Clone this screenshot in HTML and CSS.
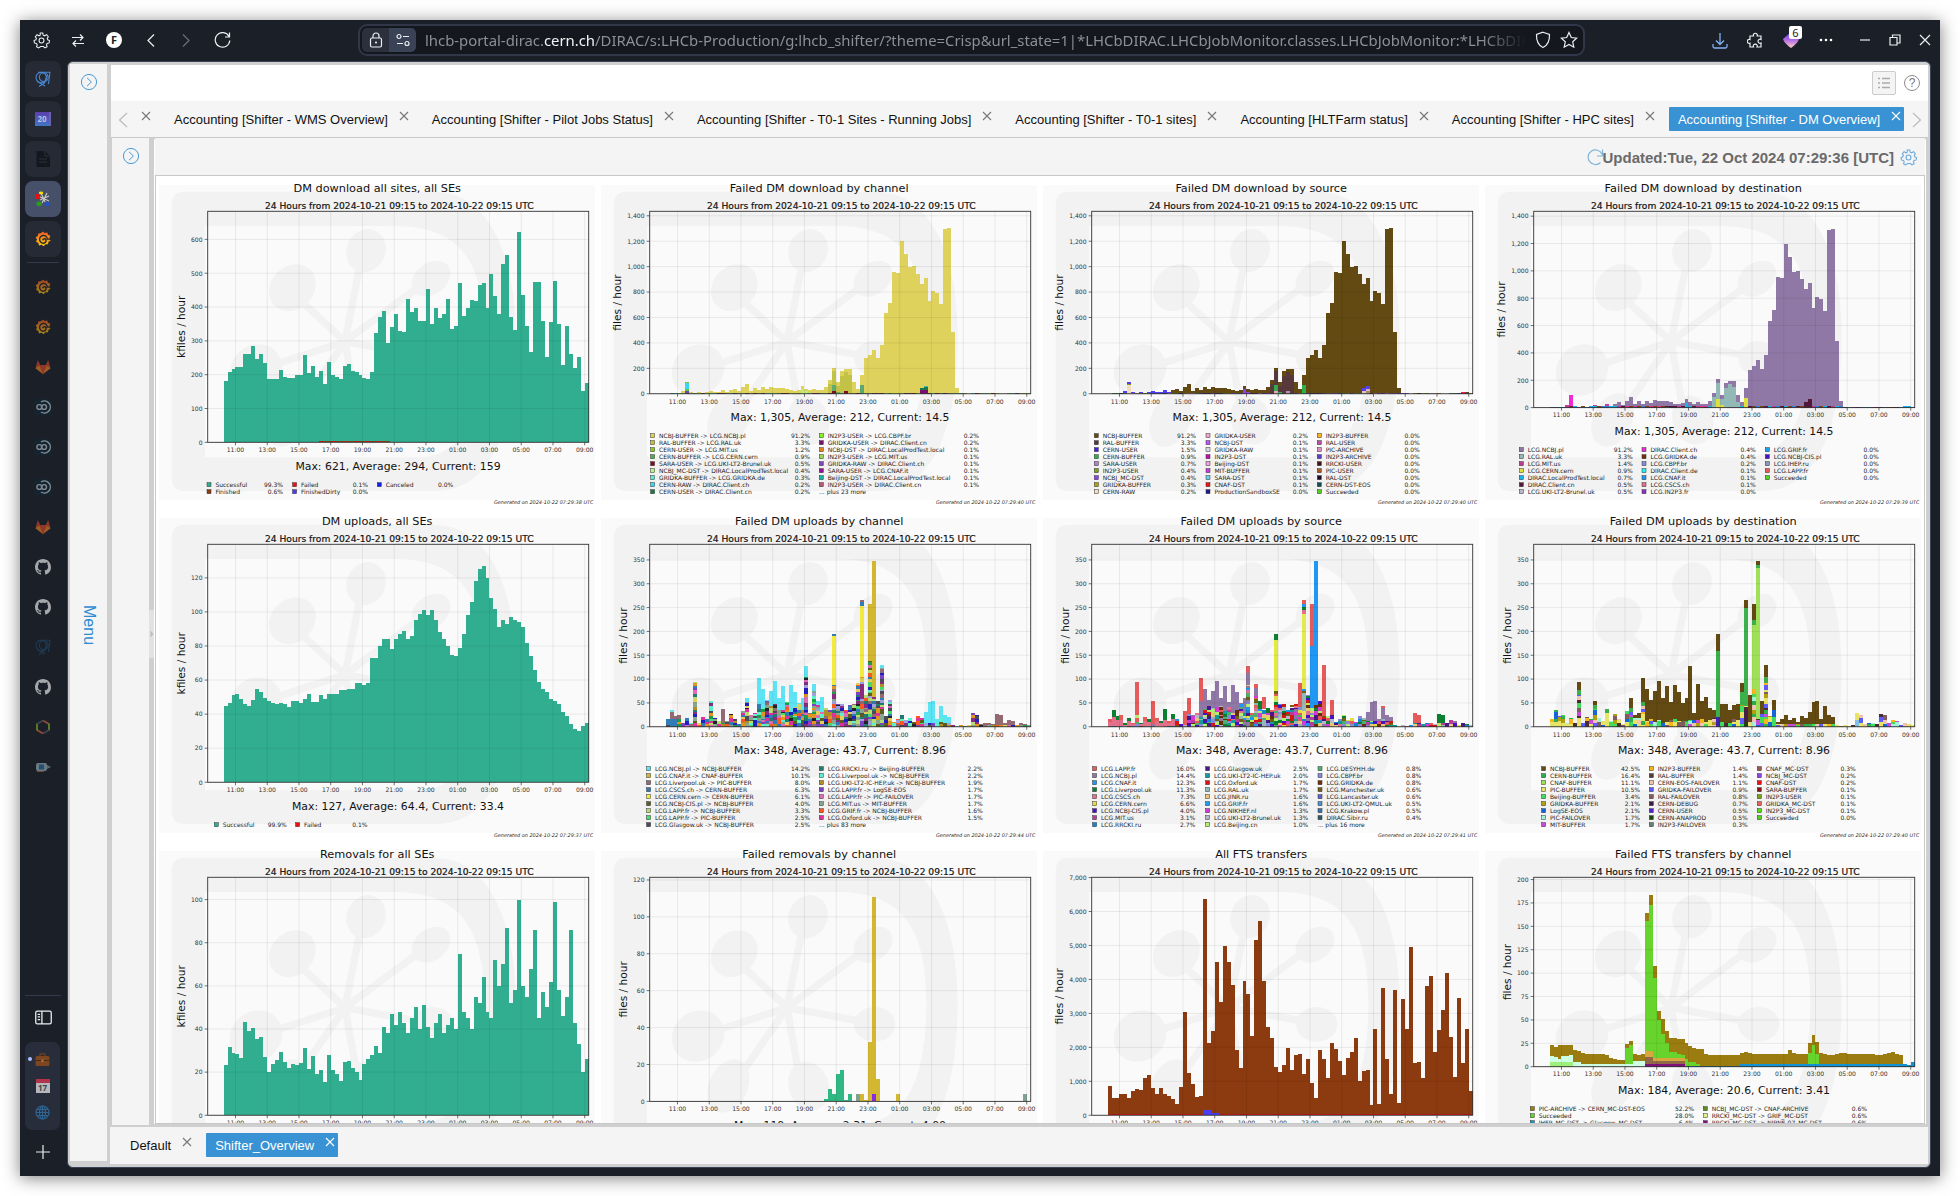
FILE: index.html
```html
<!DOCTYPE html>
<html lang="en">
<head>
<meta charset="utf-8">
<title>Accounting - DM Overview</title>
<link rel="stylesheet" href="styles.css">
</head>
<body>
<svg class="defs" width="0" height="0">
  <defs>
    <linearGradient id="fire" x1="0" y1="0" x2="0" y2="1"><stop offset="0" stop-color="#f05a28"/><stop offset="1" stop-color="#fbca0a"/></linearGradient>
    <linearGradient id="gem" x1="0" y1="0" x2="0" y2="1"><stop offset="0" stop-color="#5a4ae8"/><stop offset=".5" stop-color="#b36be8"/><stop offset="1" stop-color="#ffd0c0"/></linearGradient>
    <symbol id="i-x" viewBox="0 0 10 10"><path d="M1 1L9 9M9 1L1 9" fill="none" stroke="currentColor" stroke-width="1.1"/></symbol>
    <symbol id="i-go" viewBox="0 0 18 18"><circle cx="9" cy="9" r="7.6" fill="none" stroke="currentColor"/><path d="M7 4.8L11.4 9L7 13.2" fill="none" stroke="currentColor"/></symbol>
    <symbol id="i-cern" viewBox="0 0 16 16"><g fill="none" stroke="currentColor" stroke-width="1.1"><circle cx="6.2" cy="6.6" r="5.2"/><circle cx="8.800" cy="6.2" r="4.400"/><path d="M3 1.200H15.500M15 1L13.500 13M12.500 3.500L9.500 12L4 15.500M2.500 10.500L10 15"/></g></symbol>
    <symbol id="i-grafana" viewBox="0 0 16 16"><path d="M8 .4L9.7 2L12.2 1.4L13 3.7L15.4 4.8L14.4 7.2L15.6 9.5L13.4 10.9L13 13.3L10.5 13.2L8.6 15.3L6.6 13.8L4 14.5L3.4 12L1 10.8L2 8.5L.6 6.3L2.8 4.9L3.2 2.4L5.8 2.3Z" fill="url(#fire)"/><path d="M15.500 8.200H12.400A3.900 3.900 0 1 0 9.200 12.200A3.200 3.200 0 0 0 10.800 8.200A2 2 0 0 0 7.600 9.200" fill="none" stroke="#20252e" stroke-width="1.300"/></symbol>
    <symbol id="i-gitlab" viewBox="0 0 16 16"><path d="M8 15L.5 9.3L2.8 1L5.2 6H10.8L13.2 1L15.5 9.3Z" fill="#d44a2a"/><path d="M8 15L.5 9.3L5.2 6L8 15L10.8 6L15.5 9.3Z" fill="#e8852a"/><path d="M8 15L4 6H12Z" fill="#d8472a"/></symbol>
    <symbol id="i-eight" viewBox="0 0 16 16"><rect width="16" height="16" fill="#0d2a36"/><g fill="none" stroke="#c4ccd2" stroke-width="1.400"><circle cx="4.300" cy="8" r="2.400"/><circle cx="9.100" cy="8" r="2.400"/><path d="M6 3A6 6 0 1 1 6 13"/></g></symbol>
    <symbol id="i-github" viewBox="0 0 16 16"><path fill="#b4b6ba" d="M8 0C3.58 0 0 3.58 0 8c0 3.54 2.29 6.53 5.47 7.59.4.07.55-.17.55-.38 0-.19-.01-.82-.01-1.49-2.01.37-2.53-.49-2.69-.94-.09-.23-.48-.94-.82-1.13-.28-.15-.68-.52-.01-.53.63-.01 1.08.58 1.23.82.72 1.21 1.87.87 2.33.66.07-.52.28-.87.51-1.07-1.78-.2-3.64-.89-3.64-3.95 0-.87.31-1.59.82-2.15-.08-.2-.36-1.02.08-2.12 0 0 .67-.21 2.2.82.64-.18 1.32-.27 2-.27s1.36.09 2 .27c1.53-1.04 2.2-.82 2.2-.82.44 1.1.16 1.92.08 2.12.51.56.82 1.27.82 2.15 0 3.07-1.87 3.75-3.65 3.95.29.25.54.73.54 1.48 0 1.07-.01 1.93-.01 2.2 0 .21.15.46.55.38A8 8 0 0 0 16 8c0-4.42-3.58-8-8-8z"/></symbol>
    <symbol id="i-gear" viewBox="0 0 16 16"><g fill="none" stroke="currentColor"><circle cx="8" cy="8" r="2.3"/><path d="M6.8 1h2.4l.4 2 1.4.6 1.8-1.1 1.6 1.9-1 1.6.5 1.3 1.6.7-.3 2.3-1.9.5-.7 1.2.7 1.8-2 1.2-1.5-1.3H7.2L5.300 15l-2-1.2.7-1.800-.8-1.2-1.900-.5L1 8l1.700-.7.5-1.300-1-1.600 1.600-1.900 1.800 1.100 1.200-.6z"/></g></symbol>
  </defs>
</svg>

<div class="window">
  <header class="topbar">
    <svg class="tb-icon" style="width:17px" viewBox="0 0 16 16"><use href="#i-gear"/></svg>
    <svg class="tb-icon" style="width:14px" viewBox="0 0 14 14"><path d="M1 4H12M9 1L12 4L9 7M13 10H2M5 7L2 10L5 13" class="ln"/></svg>
    <span class="f-badge">F</span>
    <svg class="tb-icon" style="width:14px" viewBox="0 0 14 14"><path d="M10 1L4 7L10 13" class="ln"/></svg>
    <svg class="tb-icon dim" style="width:14px" viewBox="0 0 14 14"><path d="M4 1L10 7L4 13" class="ln"/></svg>
    <svg class="tb-icon reload" style="width:17px" viewBox="0 0 17 17"><path d="M15 4.500A7.300 7.300 0 1 0 15.800 8.500M15.500 .5V5H11" class="ln"/></svg>
    <div class="address">
      <span class="chips">
        <span class="chip lock"><svg width="14" height="16" viewBox="0 0 14 16"><rect x="1.500" y="6" width="11" height="9" rx="1.500" class="ln"/><path d="M4 6V4a3 3 0 0 1 6 0V6" class="ln"/><circle cx="7" cy="10.500" r="1" fill="#fff"/></svg></span>
        <span class="chip perms"><svg width="14" height="14" viewBox="0 0 14 14"><circle cx="3" cy="3.500" r="2" class="ln"/><path d="M7 3.500H13M1 10.500H7" class="ln"/><circle cx="11" cy="10.500" r="2" class="ln"/></svg></span>
      </span>
      <span class="url">lhcb-portal-dirac.<b>cern.ch</b>/DIRAC/s:LHCb-Production/g:lhcb_shifter/?theme=Crisp&amp;url_state=1|*LHCbDIRAC.LHCbJobMonitor.classes.LHCbJobMonitor:*LHCbDIRAC.LHCbT</span>
      <svg width="16" height="18" viewBox="0 0 16 18"><path d="M8 1.200L14.500 3.500C14.700 10 12.500 14.500 8 16.500C3.500 14.500 1.300 10 1.500 3.500Z" class="ln"/></svg>
      <svg width="18" height="18" viewBox="0 0 18 18"><path d="M9 1.500L11.300 6.500L16.700 7.100L12.700 10.800L13.800 16.200L9 13.500L4.200 16.200L5.300 10.800L1.300 7.100L6.700 6.500Z" class="ln"/></svg>
    </div>
    <div class="ctl">
      <svg width="16" height="17" viewBox="0 0 16 17"><path d="M8 1V12M4 8.500L8 12.500L12 8.500M1 12V14.500Q1 16 2.500 16H13.500Q15 16 15 14.500V12" fill="none" stroke="#84b0f0" stroke-width="1.300"/></svg>
      <svg width="16" height="17" viewBox="0 0 16 17"><path d="M3 4H6.500A2 2 0 1 1 10.200 4H14V7.500A2 2 0 1 0 14 11V15H10A2 2 0 1 0 6.500 15H3V11.200A2 2 0 1 1 3 7.500Z" class="ln"/></svg>
      <span class="gem"><svg width="18" height="18" viewBox="0 0 18 18"><path d="M9 1L17 8Q16 12 9 17Q2 12 1 8Z" fill="url(#gem)"/></svg><i class="count">6</i></span>
      <svg width="14" height="4" viewBox="0 0 14 4" fill="#fff"><circle cx="2" cy="2" r="1.300"/><circle cx="7" cy="2" r="1.300"/><circle cx="12" cy="2" r="1.300"/></svg>
    </div>
    <div class="winctl">
      <svg width="12" height="12" viewBox="0 0 12 12"><path d="M1 6H11" class="ln"/></svg>
      <svg width="12" height="12" viewBox="0 0 12 12"><path d="M1 3.500H8V11H1ZM3.500 3.500V1H11V9H8" class="ln"/></svg>
      <svg width="12" height="12" viewBox="0 0 12 12"><path d="M1 1L11 11M11 1L1 11" class="ln"/></svg>
    </div>
  </header>

  <div class="body">
    <aside class="rail">
      <div class="tile"><svg class="cern" viewBox="0 0 16 16"><use href="#i-cern"/></svg></div>
      <div class="tile"><span class="twenty">20</span></div>
      <div class="tile"><svg viewBox="0 0 16 16"><path d="M1.500 0H10L15 5V16H1.500Z" fill="#14171d"/><path d="M10 0V5H15M4 8H12M4 11H12" stroke="#2b303a" fill="none"/></svg></div>
      <div class="tile on"><svg viewBox="0 0 16 16"><path d="M3 5L14 10M12 2L7 12M5 9L14 5M6 2L10 11" stroke="#c8c8c0" stroke-width="1.200"/><ellipse cx="6" cy="2" rx="2.200" ry="1.400" fill="#ffe000"/><ellipse cx="2.500" cy="5.500" rx="2.500" ry="2.700" fill="#e81010"/><ellipse cx="4" cy="12.800" rx="2.700" ry="2.400" fill="#2c9a20"/><ellipse cx="12.300" cy="13" rx="2.800" ry="2.200" fill="#2a4fc0"/></svg></div>
      <div class="tile"><svg viewBox="0 0 16 16"><use href="#i-grafana"/></svg></div>
      <hr class="rule">
      <div class="tile flat"><svg viewBox="0 0 16 16"><use href="#i-grafana"/></svg></div>
      <div class="tile flat"><svg viewBox="0 0 16 16"><use href="#i-grafana"/></svg></div>
      <div class="tile flat"><svg viewBox="0 0 16 16"><use href="#i-gitlab"/></svg></div>
      <div class="tile flat"><svg viewBox="0 0 16 16"><use href="#i-eight"/></svg></div>
      <div class="tile flat"><svg viewBox="0 0 16 16"><use href="#i-eight"/></svg></div>
      <div class="tile flat"><svg viewBox="0 0 16 16"><use href="#i-eight"/></svg></div>
      <div class="tile flat"><svg viewBox="0 0 16 16"><use href="#i-gitlab"/></svg></div>
      <div class="tile flat gh"><svg viewBox="0 0 16 16"><use href="#i-github"/></svg></div>
      <div class="tile flat gh"><svg viewBox="0 0 16 16"><use href="#i-github"/></svg></div>
      <div class="tile flat"><svg class="cern faint" viewBox="0 0 16 16"><use href="#i-cern"/></svg></div>
      <div class="tile flat gh"><svg viewBox="0 0 16 16"><use href="#i-github"/></svg></div>
      <div class="tile flat"><svg viewBox="0 0 16 16" fill="none" stroke-width="2"><path d="M8 1.500L14 5" stroke="#d9604a"/><path d="M14 4.500V11.500" stroke="#84b02c"/><path d="M14 11L8 14.500" stroke="#555b62"/><path d="M8 14.500L2 11" stroke="#d9604a"/><path d="M2 11.500V4.500" stroke="#84b02c"/><path d="M2 5L8 1.500" stroke="#555b62"/></svg></div>
      <div class="tile flat"><svg viewBox="0 0 16 16"><rect x="1" y="4" width="11" height="8" rx="2" fill="#9ab0bc"/><rect x="4" y="5.500" width="5" height="5" fill="#2b6f9c"/><path d="M12 6L16 8L12 10Z" fill="#7c98a8"/><path d="M2 12.500H9" stroke="#b0604a"/></svg></div>
      <span class="spacer"></span>
      <hr class="rule wide">
      <div class="mini side"><svg viewBox="0 0 16 14" width="17" height="15"><rect x=".7" y="1" width="14.600" height="12" rx="1.500" class="ln"/><path d="M6.500 1V13M2.500 4H4.800M2.500 6.500H4.800M2.500 9H4.800" class="ln"/></svg></div>
      <div class="group">
        <i class="dot"></i>
        <svg width="15" height="15" viewBox="0 0 15 15"><path d="M5 4V2H10V4" fill="none" stroke="#6b3d1e" stroke-width="1.300"/><rect x=".5" y="4" width="14" height="10" rx="1.500" fill="#7d4520"/><path d="M.5 8.500H14.500" stroke="#4d2a12"/><rect x="6.500" y="7.500" width="2" height="2.500" fill="#a9784c"/></svg>
        <span class="cal"><b></b>17</span>
        <svg width="15" height="15" viewBox="0 0 15 15" fill="none" stroke="#2f6390" stroke-width="1.200"><circle cx="7.500" cy="7.500" r="6.500"/><ellipse cx="7.500" cy="7.500" rx="3" ry="6.500"/><path d="M1 7.500H14M2 4.300H13M2 10.700H13M7.500 1V14"/></svg>
      </div>
      <div class="mini plus"><svg viewBox="0 0 14 14" width="14" height="14"><path d="M7 0V14M0 7H14" class="ln"/></svg></div>
    </aside>

    <div class="page">
      <nav class="menu-strip">
        <svg class="go" viewBox="0 0 18 18"><use href="#i-go"/></svg>
        <span class="menu-label">Menu</span>
      </nav>
      <main class="desk">
        <div class="banner">
          <span class="listbtn"><svg width="14" height="12" viewBox="0 0 14 12"><path d="M5 1.500H13M5 6H13M5 10.500H13M1 1.500H3M1 6H3M1 10.500H3" stroke="#aaa" stroke-width="1.300"/></svg></span>
          <span class="help">?</span>
        </div>
        <div class="tabs">
          <svg class="scroll first" width="10" height="16" viewBox="0 0 10 16"><path d="M9 1L1.500 8L9 15" fill="none" stroke="#bbb" stroke-width="1.200"/></svg>
          <svg class="x lone"><use href="#i-x"/></svg>
          <span class="tab"><span>Accounting [Shifter - WMS Overview]</span><svg class="x"><use href="#i-x"/></svg></span>
          <span class="tab"><span>Accounting [Shifter - Pilot Jobs Status]</span><svg class="x"><use href="#i-x"/></svg></span>
          <span class="tab"><span>Accounting [Shifter - T0-1 Sites - Running Jobs]</span><svg class="x"><use href="#i-x"/></svg></span>
          <span class="tab"><span>Accounting [Shifter - T0-1 sites]</span><svg class="x"><use href="#i-x"/></svg></span>
          <span class="tab"><span>Accounting [HLTFarm status]</span><svg class="x"><use href="#i-x"/></svg></span>
          <span class="tab"><span>Accounting [Shifter - HPC sites]</span><svg class="x"><use href="#i-x"/></svg></span>
          <span class="tab active"><span>Accounting [Shifter - DM Overview]</span><svg class="x"><use href="#i-x"/></svg></span>
          <svg class="scroll last" width="10" height="16" viewBox="0 0 10 16"><path d="M1 1L8.500 8L1 15" fill="none" stroke="#bbb" stroke-width="1.200"/></svg>
        </div>
        <div class="work">
          <div class="selector"><svg class="go" viewBox="0 0 18 18"><use href="#i-go"/></svg></div>
          <div class="splitter"><svg class="handle" viewBox="0 0 5 48"><path d="M1.500 20.500L4.500 24L1.500 27.500Z" fill="#bbb"/></svg></div>
          <section class="panel">
            <div class="status">
              <svg class="refresh" width="17" height="17" viewBox="0 0 17 17"><path d="M13.500 13.500A7.300 7.300 0 1 1 15 5M15.500 .5V7H10" fill="none" stroke="#7fb4dc" stroke-width="1.200"/></svg>
              <span>Updated:Tue, 22 Oct 2024 07:29:36 [UTC]</span>
              <svg class="cog" width="17" height="17" viewBox="0 0 16 16"><use href="#i-gear"/></svg>
            </div>
            <div class="plots" id="plots"></div>
          </section>
        </div>
        <footer class="desktops">
          <span class="tab"><span>Default</span><svg class="x"><use href="#i-x"/></svg></span>
          <span class="tab active"><span>Shifter_Overview</span><svg class="x"><use href="#i-x"/></svg></span>
        </footer>
      </main>
    </div>
  </div>
</div>
<script src="charts.js"></script>
</body>
</html>
```
FILE: styles.css
```css
* { box-sizing: border-box; }
body { margin: 0; padding: 20px; width: 1960px; height: 1196px; background: #fff; overflow: hidden; font-family: "Liberation Sans", Arial, sans-serif; }
.defs { position: absolute; }
.ln { fill: none; stroke: currentColor; stroke-width: 1.2; }
.window { width: 1920px; height: 1156px; background: #1b1f27; box-shadow: 0 2px 16px rgba(0,0,0,.5); display: flex; flex-direction: column; color: #eceef2; }

/* browser toolbar */
.topbar { height: 41px; display: flex; align-items: center; padding: 0 9px 1px 13px; flex: none; }
.tb-icon { height: 17px; margin-right: 21px; }
.tb-icon.dim { color: #6a6f7a; }
.f-badge { width: 16px; height: 16px; border-radius: 8px; background: #fff; color: #1b1f27; font: bold 11px/16px "Open Sans", sans-serif; text-align: center; margin-right: 22px; margin-left: 0; }
.topbar .reload { margin-right: 127px; }
.address { width: 1227px; height: 32px; border: 2px solid #313748; border-radius: 9px; background: #14171e; display: flex; align-items: center; padding: 0 5px 0 2px; gap: 9px; }
.chips { display: flex; }
.chip { width: 27px; height: 24px; display: flex; align-items: center; justify-content: center; background: #2b303c; }
.chip.lock { border-radius: 5px 0 0 5px; }
.chip.perms { border-radius: 0 5px 5px 0; background: #3a4256; }
.url { flex: 1; min-width: 0; overflow: hidden; white-space: nowrap; font: 14.87px/20px "Noto Sans", sans-serif; color: #8c8f96; -webkit-mask-image: linear-gradient(90deg, #000 96%, transparent); }
.url b { font-weight: 400; color: #f4f4f6; }
.ctl { display: flex; align-items: center; gap: 19px; margin-left: auto; margin-right: 26px; }
.gem { position: relative; display: flex; }
.count { position: absolute; left: 7px; top: -5px; width: 13px; height: 13px; font: 11px/13px "Noto Sans", sans-serif; background: #fff; color: #222; text-align: center; border-radius: 2px; }
.winctl { display: flex; align-items: center; gap: 18px; }

/* side rail */
.body { flex: 1; min-height: 0; display: flex; }
.rail { width: 47px; display: flex; flex-direction: column; align-items: flex-start; padding: 0 0 17px 5px; }
.tile { width: 36px; height: 36px; margin-bottom: 4px; border-radius: 8px; background: #252a34; display: flex; align-items: center; justify-content: center; flex: none; }
.tile > svg { width: 16px; height: 16px; }
.tile.on { background: #465068; }
.tile.flat { background: none; }
.tile.flat > svg { opacity: .62; }
.tile.gh > svg { opacity: .9; }
.cern { color: #4a86d0; }
.tile .cern.faint { color: #24557c; opacity: .5; }
.twenty { width: 16px; height: 14px; background: linear-gradient(#5b3fae, #4076c4); color: #b9bfe0; font: bold 8px/14px "Open Sans", sans-serif; text-align: center; border-right: 2px solid #6f5fae; }
.rule { width: 32px; margin: 1px 0 6px 2px; border: 0; height: 1px; background: #333a4b; flex: none; }
.rule.wide { width: 36px; margin: 0 0 14px; }
.spacer { flex: 1; }
.mini { width: 36px; display: flex; justify-content: center; flex: none; }
.mini.side { margin-bottom: 17px; }
.mini.plus { margin-top: 15px; }
.group { position: relative; width: 35px; height: 88px; border-radius: 7px; background: #272d3a; display: flex; flex-direction: column; align-items: center; justify-content: center; gap: 12px; }
.dot { position: absolute; left: 3px; top: 15px; width: 4px; height: 4px; border-radius: 2px; background: #a9c1ff; }
.cal { width: 14px; height: 14px; background: #b4b7bc; color: #444; font: bold 8px/9px "Open Sans", sans-serif; text-align: center; }
.cal b { display: block; height: 4px; background: #b3344a; }

/* portal page */
.page { width: 1864px; height: 1107px; border-radius: 6px; border: 1px solid #3a4256; background: #cfcfcf; display: flex; padding: 2px 2px 4px 2px; }
.menu-strip { width: 37px; height: 1097px; background: #f4f4f4; display: flex; flex-direction: column; align-items: center; padding-top: 9px; flex: none; }
.go { width: 18px; height: 18px; color: #4a9ad6; flex: none; }
.menu-label { writing-mode: vertical-rl; font-size: 16px; line-height: 18px; color: #2d8bd2; margin-top: 514px; }
.desk { width: 1818px; margin-left: 3px; margin-top: 1px; display: flex; flex-direction: column; }
.banner { height: 36px; margin-left: 1px; background: #fff; display: flex; justify-content: flex-end; align-items: center; padding: 0 8px 0 0; gap: 8px; flex: none; }
.listbtn { width: 24px; height: 24px; border: 1px solid #ccc; border-radius: 2px; background: #f4f4f4; display: flex; align-items: center; justify-content: center; }
.help { width: 16px; height: 16px; border: 1px solid #8c8c8c; border-radius: 8px; color: #777; font-size: 12px; line-height: 14px; text-align: center; }
.tabs { height: 37px; margin-left: 1px; background: #f5f5f5; border-bottom: 1px solid #c8c8c8; display: flex; align-items: flex-start; padding: 6px 8px 0 7px; flex: none; }
.tab { height: 24px; display: flex; align-items: center; padding: 1px 3px 0 9px; margin-right: 11px; font-size: 13px; color: #111; white-space: nowrap; border-radius: 1px; flex: none; }
.tab.active { background: #3892d4; color: #fff; }
.x { width: 10px; height: 10px; color: #777; margin: -8px 0 0 11px; flex: none; }
.active .x { color: #fff; }
.tabs .x.lone { margin: 4px 14px 0 13px; }
.scroll { flex: none; }
.scroll.first { margin-top: 5px; }
.scroll.last { margin: 5px 0 0 -1px; }
.tabs .tab.active { margin-right: 9px; }
.work { height: 989px; display: flex; padding-left: 2px; flex: none; }
.selector { width: 37px; height: 987px; background: #f4f4f4; display: flex; justify-content: center; padding-top: 9px; }
.splitter { width: 5px; display: flex; align-items: center; padding-top: 2px; }
.handle { width: 5px; height: 48px; background: #e2e2e2; }
.panel { width: 1772px; height: 986px; background: #f4f4f4; border-radius: 3px 3px 0 0; display: flex; flex-direction: column; border-right: 1px solid #fff; border-left: 1px solid #fff; }
.status { height: 37px; display: flex; justify-content: flex-end; align-items: center; padding: 1px 8px 0 0; font-weight: bold; font-size: 15px; color: #6a6a6a; flex: none; }
.cog { color: #6aa9dc; margin-left: 6px; }
.refresh { margin-right: -1px; }
.plots { flex: 1; min-height: 0; overflow: hidden; background: #fff; border: 1px solid #c8c8c8; display: grid; grid-template-columns: repeat(4, 442px); grid-auto-rows: 333px; }
.plots svg { display: block; }
.desktops { height: 37px; background: #f4f4f4; display: flex; align-items: flex-start; padding: 6px 0 0 11px; flex: none; }

/* plots */
.plot text { font-family: "DejaVu Sans", sans-serif; fill: #111; }
.t-title { font-size: 11.3px; }
.t-sub { font-size: 9.13px; stroke: #111; stroke-width: .2px; }
.t-max { font-size: 10.87px; }
.t-y { font-size: 10.6px; }
.plot .t-tick { font-size: 6.1px; fill: #333; }
.plot .t-leg { font-size: 6px; fill: #222; }
.plot .t-gen { font-size: 4.95px; font-style: italic; fill: #222; }
```
FILE: charts.js
```js
const W = 442, H = 333, L = 51.7, R = 432.7, T = 35.3, STEP = (R - L) / 96;

const downloads = [182,208,217,224,224,262,260,285,247,262,236,188,188,188,213,192,189,189,200,198,257,204,226,193,211,172,237,199,193,188,226,232,211,209,199,190,187,207,322,370,389,294,342,380,329,326,423,386,396,359,359,454,350,396,369,380,424,336,345,470,374,396,422,419,466,470,396,499,433,380,526,554,370,331,621,435,345,268,475,473,360,251,355,478,351,230,345,262,221,251,152,176];
const failedDown = [1,6,4,3,20,95,12,8,10,3,14,18,15,12,28,12,28,38,22,50,77,24,46,28,50,35,55,48,48,45,40,30,25,32,60,38,30,38,30,30,50,106,206,95,178,197,192,90,38,147,278,302,347,283,385,634,715,955,948,1200,1102,995,1002,940,866,910,730,806,792,706,1298,1305,485,45,4,5,1,2,5,6,5,8,2,2,1,1,4,8,3,12,10,6];
const uploads = [44.5,46.5,51.5,52,49,46,44.5,48.5,54.5,53,49.5,47.5,46.5,46,46.5,46,44,47.5,48,46.5,49,52,47,47,51,49,52,52,52,54,54,55,54.5,58.5,58,57,58,73,73,80,84,84,78,84,87,89,84,86,95,99,101,98,101,95,88,84,80,75,74,79,87,98,106,118,125,127,120,108,102,91,95,93,97,95,94,91,82,74,66,59,55,53,49,48,46,41,39,34,31,30,33,35];
const failedUp = [17,35,22,25,7,19,8,93,8,20,17,55,19,12,38,12,26,17,6,33,60,25,29,103,80,57,76,95,61,85,51,87,73,50,60,128,29,90,54,63,40,36,194,47,48,36,45,47,91,265,67,258,348,54,130,23,57,10,16,25,14,18,9,22,18,30,51,55,17,44,24,20,3,1,4,1,3,28,24,5,7,8,6,26,25,7,14,12,3,8,5,4];
const removals = [23.5,31.5,29,28.5,26.5,43.3,39,40.5,35.5,36.5,27,20,24,25.7,29.5,24.6,22,23.8,23.4,24.3,31.3,21.3,27.5,19,21,15.5,28,20.8,19,16,24.5,25,21.7,20,16.5,24,26,28,32,29,41,38,47,42,48,43,38,45,50,40,51,41,36,43,47,38,42,45,40,75,48,45,40,55,52,64,48,45,72,60,70,87,52,58,100,60,55,68,86,45,57,50,62,99,58,46,55,86,43,33,20,26];
const fts = [865,510,510,620,640,510,720,780,755,1100,1190,810,640,800,640,570,480,320,825,3050,1245,930,550,570,6370,2140,2470,4500,3340,4980,4500,3840,1930,1395,3950,3570,2345,5160,5730,3940,2610,2270,1430,1275,1470,1970,1330,1765,1815,1215,1650,950,500,1925,1650,1090,2130,1965,1610,1180,1700,1870,2285,1020,1315,1335,300,2530,345,3760,1650,620,3690,370,3430,2530,4960,1540,1560,1100,3800,4110,1855,2520,3090,4180,2295,1140,3440,1540,2540,715];
const ftsFail = [23,21,23.5,23.5,23.5,23.5,18,17,15,14,14,14,14,14,13,9,8,7.5,7,24,27,14,13,14,164,184,108,60,51,38,31,31,30,30,25,22,20,19,19,14,13,13,13,13,13,13,13,13,15,16,15,14,14,14,14,14,14,14,14,14,18,15,14,14,14,25,34,26,15,14,13,13,14,15,15,14,14,14,14,14,14,14,13,12,14,15,16,14,12,3,2,5];
const failedRem = Array(92).fill(0);
Object.entries({40:1.5,41:6.5,42:4,43:15,44:17,45:1,46:4,48:4,49:4,50:1,51:32,52:110.5,53:12,58:4,90:4}).forEach(([k, v]) => failedRem[k] = v);

/* deterministic generator for the many thin contributors of a stack */
let seed = 7;
const rnd = () => (seed = (seed * 16807) % 2147483647) / 2147483647;
function mixed(from, to, pal, thick) {
  const out = [];
  while (from < to) {
    const h = thick * (0.6 + rnd());
    out.push([Math.min(to, from + h), pal[Math.floor(rnd() * pal.length)]]);
    from += h;
  }
  return out;
}
const palCh = ['#317cb4','#946a72','#e0d05a','#5c5c1e','#b5dc70','#45dd68','#4b4b57','#227a70','#5cf0cc','#b08e22','#7b43c4','#e06ab8','#86a78e','#ff5722','#e0309c','#2020c0','#209c48','#a0a0e0','#e2951e','#8a2a80','#20222c','#86a78e'];
const palSrc = ['#e85a5a','#9078a6','#1e98f4','#0a8030','#e2708c','#e0e040','#4a10c8','#b83d98','#1585cc','#48188a','#149a9a','#d81414','#92b9b6','#e8c878','#d43ad4','#b8b8cc','#b4f070','#4cb070','#8888dc','#662c0c','#706010'];
const palDst = ['#2faf4b','#e8e468','#e8e468','#40dc5c','#b0a010','#1565d8','#a4f0d8','#c84ad8','#f8b418','#4a2c34','#f0c4b0','#5c5cff','#805c5c','#e8e468','#40dc5c'];

const dCh = failedDown.map((v, k) => {
  const b = {5:[[22,'#7840a8'],[34,'#50d040'],[85,'#35d8f8'],[95,'#90c020']],41:[[8,'#801020'],[80,'#c2c246']],42:[[20,'#801020'],[70,'#5fae70'],[178,'#c2c246']],43:[[10,'#60b060'],[60,'#c2c246']],44:[[8,'#40b0a0'],[140,'#c2c246']],45:[[25,'#801020'],[172,'#c2c246']],46:[[8,'#e08020'],[150,'#c2c246']],34:[[38,'#b8f080']],35:[[18,'#b8f080']],49:[[72,'#5aa870']],64:[[30,'#7a1070'],[42,'#187848']],65:[[30,'#7a1070'],[50,'#187848'],[60,'#30c0c8']]}[k];
  return [...(b || mixed(0, Math.min(v, 9), ['#8cc820','#60b060','#801020','#40d8d0','#90f020','#7a1070'], 8)), [k > 73 ? v * .7 : v, k > 73 ? '#3ca068' : '#dfd25c']];
});
const dSrc = failedDown.map((v, k) => {
  const b = {5:[[8,'#e8d8c0'],[65,'#f4dcbc'],[80,'#80a010'],[95,'#5040f0']],41:[[80,'#57393c']],42:[[18,'#e8a0c8'],[68,'#2faf4b'],[178,'#57393c']],43:[[14,'#2faf4b'],[60,'#57393c']],44:[[140,'#57393c']],45:[[8,'#2faf4b'],[24,'#c088c0'],[172,'#57393c']],46:[[150,'#57393c']],34:[[38,'#9040e8']],35:[[15,'#9040e8']],49:[[72,'#2faf4b']],64:[[20,'#e0c0d0'],[42,'#5040f0']],65:[[18,'#a09060'],[34,'#e0b0c8'],[60,'#5040f0']],89:[[12,'#f02040']]}[k];
  return [...(b || mixed(0, Math.min(v, 9), ['#4a30e8','#9040e8','#30a040','#90a010','#301060','#e090b0'], 8)), [v, k < 16 ? '#5040f0' : '#624a12']];
});
const dDst = failedDown.map((v, k) => {
  const b = {5:[[10,'#802040'],[95,'#f02ad4']],41:[[80,'#92b9b6']],42:[[66,'#e0e03d'],[178,'#92b9b6']],43:[[22,'#e0e03d'],[60,'#92b9b6']],44:[[8,'#e0e03d'],[140,'#92b9b6']],45:[[172,'#92b9b6']],46:[[150,'#92b9b6']],47:[[40,'#92b9b6']],34:[[36,'#18b4f0']],35:[[14,'#18b4f0']],49:[[72,'#e0e03d']],64:[[42,'#521838']],65:[[60,'#521838']]}[k];
  return [...(b || mixed(0, Math.min(v, 9), ['#c03a90','#18b4f0','#e03090','#521838','#804010','#3080e0'], 8)), [v, k < 16 ? '#c0409c' : '#9078a6']];
});
const C = '#5ce4f4', G = '#d4b730', Y = '#f2ea3c';
const stack = (parts, v, pal, thick) => (parts || [[v]]).reduce((a, p, i, all) => a.concat(p[1] ? [p] : mixed(i ? all[i - 1][0] : 0, p[0], pal, thick)), []);
const uCh = failedUp.map((v, k) => {
  let t = {42:[[87],[190,Y],[194,'#317cb4']],49:[[58],[90,'#8a2a80'],[105],[253,Y],[262,'#317cb4'],[265,'#946a72']],51:[[138],[258,G]],52:[[62],[348,G]],35:[[105],[128,C]],37:[[75],[90,C]],20:[[52],[60,C]],69:[[18],[44,C]],14:[[8],[38,'#946a72']],0:[[3],[17,'#317cb4']],1:[[16,'#317cb4'],[30,'#946a72'],[35,C]],2:[[16,'#317cb4'],[22,'#946a72']],54:[[124],[130,C]]}[k];
  if (!t && k >= 21 && k <= 41) t = [[Math.min(v, 28 + rnd() * 28)], [v, C]];
  if (!t && k >= 65 && k <= 71) t = [[8], [v, C]];
  if (!t && k > 78) t = [[4], [v, '#946a72']];
  return stack(t, v, palCh, 5);
});
const uSrc = failedUp.map((v, k) => {
  const RD = '#e65a5a', P = '#9078a6', B = '#1e98f4';
  let t = {7:[[25],[93,RD]],11:[[5],[55,RD]],14:[[14,'#e2708c'],[38,'#0a8030']],19:[[3],[33,RD]],20:[[27],[60,RD]],23:[[20],[55,P],[103,RD]],35:[[88],[112,P],[128,RD]],37:[[65],[82,P],[90,RD]],42:[[75],[182,'#e2ea3c'],[194,'#0a8030']],49:[[16],[32,'#e8e468'],[70,'#92b9b6'],[80],[237,'#e2ea4c'],[244,'#e2708c'],[252,'#0a8030'],[258,B],[265,RD]],51:[[40],[170,B],[258,RD]],52:[[45],[348,B]],48:[[42],[91,RD]],54:[[22],[130,RD]],56:[[25],[57,RD]],77:[[8],[28,RD]],78:[[8],[24,RD]],69:[[16],[39,P],[44,RD]],83:[[8],[26,'#0a8030']],84:[[8],[25,'#0a8030']]}[k];
  if (!t && k < 17) t = [[2], [v * .6, '#e2708c'], [v, k % 3 ? '#0a8030' : RD]];
  if (!t && k >= 21 && k <= 41) t = [[Math.min(v, 26 + rnd() * 24)], [v, k > 34 ? (k % 2 ? RD : '#0a8030') : P]];
  if (!t && k >= 65 && k <= 71) t = [[12], [v, P]];
  return stack(t, v, palSrc, 5);
});
const uDst = failedUp.map((v, k) => {
  const BR = '#624a12', GR = '#3cb04c';
  let t = {7:[[66],[77,GR],[93,BR]],11:[[38],[46,GR],[55,BR]],42:[[20,'#4020b0'],[158,GR],[194,BR]],49:[[10,'#204010'],[36,'#442044'],[44],[250,GR],[265,BR]],51:[[80],[214,'#a0e058'],[224,GR],[258,BR]],52:[[17],[333,'#a0e058'],[339,GR],[348,BR]],54:[[92],[105,GR],[130,BR]],56:[[36],[57,BR]],48:[[45],[72,GR],[91,BR]],23:[[44],[52,GR],[103,BR]],20:[[30],[40,GR],[60,BR]],53:[[27],[54,BR]],14:[[28,'#e8e468'],[38,GR]],77:[[14,'#80c0e8'],[28,'#e8e468']]}[k];
  if (!t && k >= 21 && k <= 50) t = [[Math.min(v, 8 + rnd() * 10)], [v, BR]];
  if (!t && k >= 57 && k <= 71) t = [[Math.min(v, 5)], [v, BR]];
  return stack(t, v, palDst, 7);
});
const rCh = failedRem.map((v, k) => k === 52 ? [[4, '#8a2be2'], [v, G]] : [[v, k < 47 ? '#30b882' : (k === 48 || k === 90) ? '#80a090' : G]]);
const green = {19:20,20:23,21:6,22:4,24:156,25:173,26:95,27:50,28:35,29:25,30:16,31:16,32:14,33:12,34:8,35:5,36:5,37:3,65:15,66:23,67:14};
const fCh = ftsFail.map((v, k) => {
  const s = [];
  if (k < 6) s.push([5, '#9ef07c'], [[11,10,8,11,11,12][k], '#ccffe4']);
  else if (k < 24) s.push([k < 8 ? 5 : k > 20 ? 6 : 3, '#ccffe4']);
  else if (k < 34) s.push([3, '#80107c'], [k < 26 ? 10 : 6, '#906848'], [k < 26 ? 17 : 9, '#d8a83c']);
  else if (k < 89) s.push([k > 47 ? 2.6 : 1.2, '#1393d1']);
  if (green[k]) s.push([green[k], '#66d42c']);
  s.push([v, k > 88 ? '#1393d1' : '#9a7c10']);
  return s;
});

const TEAL = '#31ae90', BRN = '#8c3a10';
const leg = s => s.split('|').map(r => r.split('~'));
const charts = [
  { t: 'DM download all sites, all SEs', y: 'kfiles / hour', m: 'Max: 621, Average: 294, Current: 159', max: 621, st: 100, g: '38', rows: 2,
    s: downloads.map((v, k) => [[(k > 23 && k < 42) ? 3 : 1.5, k % 3 ? '#8c3a10' : '#d01414'], [v, TEAL]]), cols: [[50.7,127],[136.3,212],[221,297.3]],
    l: leg('#31ae90~Successful~99.3%|#8c3a10~Finished~0.6%|#f01010~Failed~0.1%|#4a3cf0~FinishedDirty~0.0%|#1020f0~Canceled~0.0%') },
  { t: 'Failed DM download by channel', y: 'files / hour', m: 'Max: 1,305, Average: 212, Current: 14.5', max: 1305, st: 200, g: '40', rows: 9, s: dCh, cols: [[52.3,212],[221,381]],
    l: leg('#dfd25c~NCBJ-BUFFER -> LCG.NCBJ.pl~91.2%|#c8c038~RAL-BUFFER -> LCG.RAL.uk~3.3%|#8cc820~CERN-USER -> LCG.MIT.us~1.2%|#5aa850~CERN-BUFFER -> LCG.CERN.cern~0.9%|#7c0c1c~SARA-USER -> LCG.UKI-LT2-Brunel.uk~0.5%|#b8f080~NCBJ_MC-DST -> DIRAC.LocalProdTest.local~0.4%|#58ecd8~GRIDKA-BUFFER -> LCG.GRIDKA.de~0.3%|#35d8f8~CERN-RAW -> DIRAC.Client.ch~0.2%|#187848~CERN-USER -> DIRAC.Client.cn~0.2%|#80f820~IN2P3-USER -> LCG.CBPF.br~0.2%|#7a1070~GRIDKA-USER -> DIRAC.Client.cn~0.2%|#e88420~NCBJ-DST -> DIRAC.LocalProdTest.local~0.1%|#98d850~IN2P3-USER -> LCG.MIT.us~0.1%|#8048b0~GRIDKA-RAW -> DIRAC.Client.ch~0.1%|#901090~SARA-USER -> LCG.CNAF.it~0.1%|#18b4a8~Beijing-DST -> DIRAC.LocalProdTest.local~0.1%|#b85878~IN2P3-USER -> DIRAC.Client.cn~0.1%|~... plus 23 more~') },
  { t: 'Failed DM download by source', y: 'files / hour', m: 'Max: 1,305, Average: 212, Current: 14.5', max: 1305, st: 200, g: '40', rows: 9, s: dSrc, cols: [[54,156],[165.7,268],[277,379.7]],
    l: leg('#624a12~NCBJ-BUFFER~91.2%|#57393c~RAL-BUFFER~3.3%|#4a20e0~CERN-USER~1.5%|#2faf4b~CERN-BUFFER~0.9%|#b080c8~SARA-USER~0.7%|#78a010~IN2P3-USER~0.4%|#9040f0~NCBJ_MC-DST~0.4%|#b0a010~GRIDKA-BUFFER~0.3%|#f4dcbc~CERN-RAW~0.2%|#f0a8c8~GRIDKA-USER~0.2%|#b858f8~NCBJ-DST~0.1%|#dcdce8~GRIDKA-RAW~0.1%|#c010b0~IN2P3-DST~0.1%|#f0a0e0~Beijing-DST~0.1%|#c83cd8~MIT-BUFFER~0.1%|#68d0e8~SARA-DST~0.1%|#f01010~CNAF-DST~0.1%|#201890~ProductionSandboxSE~0.0%|#f8b418~IN2P3-BUFFER~0.0%|#b850a8~RAL-USER~0.0%|#e090c0~PIC-ARCHIVE~0.0%|#5c40c8~IN2P3-ARCHIVE~0.0%|#3c1414~RRCKI-USER~0.0%|#a85824~PIC-USER~0.0%|#180828~RAL-DST~0.0%|#105050~CERN-DST-EOS~0.0%|#54d020~Succeeded~0.0%') },
  { t: 'Failed DM download by destination', y: 'files / hour', m: 'Max: 1,305, Average: 212, Current: 14.5', max: 1305, st: 200, g: '39', rows: 7, s: dDst, cols: [[37,150.7],[159.7,273.7],[283,396.7]],
    l: leg('#9078a6~LCG.NCBJ.pl~91.2%|#92b9b6~LCG.RAL.uk~3.3%|#c03a90~LCG.MIT.us~1.4%|#e0e03d~LCG.CERN.cern~0.9%|#18b4f0~DIRAC.LocalProdTest.local~0.7%|#521838~DIRAC.Client.cn~0.5%|#b8b8cc~LCG.UKI-LT2-Brunel.uk~0.5%|#f02ad4~DIRAC.Client.ch~0.4%|#703008~LCG.GRIDKA.de~0.4%|#8888dc~LCG.CBPF.br~0.2%|#20f0f0~DIRAC.Client.de~0.1%|#1e98f4~LCG.CNAF.it~0.1%|#e2708c~LCG.CSCS.ch~0.1%|#8c30c8~LCG.IN2P3.fr~0.0%|#18a0f0~LCG.GRIF.fr~0.0%|#4a10c8~LCG.NCBJ-CIS.pl~0.0%|#8c98b8~LCG.IHEP.ru~0.0%|#e65a5a~LCG.LAPP.fr~0.0%|#54d020~Succeeded~0.0%') },
  { t: 'DM uploads, all SEs', y: 'kfiles / hour', m: 'Max: 127, Average: 64.4, Current: 33.4', max: 127, st: 20, g: '37', rows: 1, s: uploads.map(v => [[v, TEAL]]), cols: [[58,130.7],[139.3,211.5]],
    l: leg('#31ae90~Successful~99.9%|#f01010~Failed~0.1%') },
  { t: 'Failed DM uploads by channel', y: 'files / hour', m: 'Max: 348, Average: 43.7, Current: 8.96', max: 348, st: 50, g: '44', rows: 9, s: uCh, cols: [[48.3,212],[221,384.7]],
    l: leg('#5ce4f4~LCG.NCBJ.pl -> NCBJ-BUFFER~14.2%|#d4b730~LCG.CNAF.it -> CNAF-BUFFER~10.1%|#946a72~LCG.Liverpool.uk -> PIC-BUFFER~8.0%|#3078b4~LCG.CSCS.ch -> CERN-BUFFER~6.3%|#f2ea3c~LCG.CERN.cern -> CERN-BUFFER~6.1%|#5c5c1e~LCG.NCBJ-CIS.pl -> NCBJ-BUFFER~4.0%|#b5dc70~LCG.LAPP.fr -> NCBJ-BUFFER~3.3%|#45dd68~LCG.LAPP.fr -> PIC-BUFFER~2.5%|#4b4b57~LCG.Glasgow.uk -> NCBJ-BUFFER~2.5%|#227a70~LCG.RRCKI.ru -> Beijing-BUFFER~2.2%|#5cf0cc~LCG.Liverpool.uk -> NCBJ-BUFFER~2.2%|#b08e22~LCG.UKI-LT2-IC-HEP.uk -> NCBJ-BUFFER~1.9%|#7b43c4~LCG.LAPP.fr -> LogSE-EOS~1.7%|#e06ab8~LCG.LAPP.fr -> PIC-FAILOVER~1.7%|#86a78e~LCG.MIT.us -> MIT-BUFFER~1.7%|#ff5722~LCG.GRIF.fr -> NCBJ-BUFFER~1.6%|#e0309c~LCG.Oxford.uk -> NCBJ-BUFFER~1.5%|~... plus 83 more~') },
  { t: 'Failed DM uploads by source', y: 'files / hour', m: 'Max: 348, Average: 43.7, Current: 8.96', max: 348, st: 50, g: '41', rows: 9, s: uSrc, cols: [[52.3,155.3],[165.3,268.3],[277.7,381.3]],
    l: leg('#e65a5a~LCG.LAPP.fr~16.0%|#9078a6~LCG.NCBJ.pl~14.4%|#1e98f4~LCG.CNAF.it~12.3%|#0a8030~LCG.Liverpool.uk~11.3%|#e2708c~LCG.CSCS.ch~7.3%|#e0e040~LCG.CERN.cern~6.6%|#4a10c8~LCG.NCBJ-CIS.pl~4.0%|#b83d98~LCG.MIT.us~3.1%|#1585cc~LCG.RRCKI.ru~2.7%|#48188a~LCG.Glasgow.uk~2.5%|#149a9a~LCG.UKI-LT2-IC-HEP.uk~2.0%|#d81414~LCG.Oxford.uk~1.7%|#92b9b6~LCG.RAL.uk~1.7%|#e8c878~LCG.JINR.ru~1.6%|#18a0f0~LCG.GRIF.fr~1.6%|#d43ad4~LCG.NIKHEF.nl~1.3%|#b8b8cc~LCG.UKI-LT2-Brunel.uk~1.3%|#b4f070~LCG.Beijing.cn~1.0%|#4cb070~LCG.DESYHH.de~0.8%|#8888dc~LCG.CBPF.br~0.8%|#703008~LCG.GRIDKA.de~0.8%|#706010~LCG.Manchester.uk~0.6%|#6060c8~LCG.Lancaster.uk~0.6%|#5090d0~LCG.UKI-LT2-QMUL.uk~0.5%|#3c70a8~LCG.Krakow.pl~0.5%|#2c5c68~DIRAC.Sibir.ru~0.4%|~... plus 16 more~') },
  { t: 'Failed DM uploads by destination', y: 'files / hour', m: 'Max: 348, Average: 43.7, Current: 8.96', max: 348, st: 50, g: '40', rows: 9, s: uDst, cols: [[59.3,158],[167,265.7],[275,373.7]],
    l: leg('#624a12~NCBJ-BUFFER~42.5%|#2faf4b~CERN-BUFFER~16.4%|#a0e058~CNAF-BUFFER~11.1%|#e8e468~PIC-BUFFER~10.5%|#40dc5c~Beijing-BUFFER~3.4%|#b0a010~GRIDKA-BUFFER~2.1%|#1565d8~LogSE-EOS~2.1%|#a4f0d8~PIC-FAILOVER~1.7%|#c84ad8~MIT-BUFFER~1.7%|#f8b418~IN2P3-BUFFER~1.4%|#57393c~RAL-BUFFER~1.4%|#f0c4b0~CERN-EOS-FAILOVER~1.1%|#5c5cff~GRIDKA-FAILOVER~0.9%|#805c5c~RAL-FAILOVER~0.8%|#3c1c3c~CERN-DEBUG~0.7%|#5020d8~CERN-USER~0.5%|#184808~CERN-ANAPROD~0.5%|#648078~IN2P3-FAILOVER~0.3%|#985850~CNAF_MC-DST~0.3%|#9040f0~NCBJ_MC-DST~0.2%|#f01010~CNAF-DST~0.2%|#8c1010~SARA-BUFFER~0.1%|#78a010~IN2P3-USER~0.1%|#e86058~GRIDKA_MC-DST~0.1%|#50e010~IN2P3_MC-DST~0.1%|#54d020~Succeeded~0.0%') },
  { t: 'Removals for all SEs', y: 'kfiles / hour', m: '', max: 100.3, st: 20, rows: 1, s: removals.map(v => [[v, TEAL]]), cols: [], l: [] },
  { t: 'Failed removals by channel', y: 'files / hour', m: 'Max: 110, Average: 2.31, Current: 4.00', max: 110.4, st: 20, rows: 3, s: rCh, cols: [], l: [] },
  { t: 'All FTS transfers', y: 'files / hour', m: '', max: 6370, st: 1000, rows: 1, s: fts.map((v, k) => [...(k === 24 || k === 25 ? [[150, '#4a3cf0']] : k > 25 && k < 28 ? [[60, '#4a3cf0']] : [[25, '#c81414']]), [v, BRN]]), cols: [], l: [] },
  { t: 'Failed FTS transfers by channel', y: 'files / hour', m: 'Max: 184, Average: 20.6, Current: 3.41', max: 184, st: 25, rows: 8, s: fCh, cols: [[48,212],[221,385]],
    l: leg('#9a7c10~PIC-ARCHIVE -> CERN_MC-DST-EOS~52.2%|#66d42c~Succeeded~28.0%|#1393d1~IHEP_MC-DST -> Glasgow_MC-DST~6.4%|~~|~~|~~|~~|~~|#5c8c20~NCBJ_MC-DST -> CNAF-ARCHIVE~0.6%|#e0f090~RRCKI_MC-DST -> GRIF_MC-DST~0.6%|#80107c~RRCKI_MC-DST -> NIPNE-07_MC-DST~0.6%') }
];

const esc = s => s.replace(/>/g, '&gt;');
const f = n => +n.toFixed(2);
const mark = `<g transform="translate(-6 -6) scale(.33333)" fill="#f2f2f2"><path fill-rule="evenodd" d="M105 65H850C1020 65 1097 260 1097 500C1097 800 1010 963 860 963H105Q65 963 65 923V105Q65 65 105 65ZM165 168H730C920 168 1003 260 1003 500C1003 750 930 862 800 862H165Z"/>
<path d="M585 515L635 260M585 515L450 390M585 515L820 340M585 515L340 595M585 515L830 560M585 515L430 740M585 515L625 740" stroke="#f2f2f2" stroke-width="22"/>
<ellipse cx="648" cy="242" rx="58" ry="66" transform="rotate(25 648 242)"/><ellipse cx="427" cy="353" rx="76" ry="64" transform="rotate(-45 427 353)"/><ellipse cx="843" cy="326" rx="64" ry="47" transform="rotate(-38 843 326)"/><ellipse cx="318" cy="600" rx="82" ry="74" transform="rotate(-40 318 600)"/><ellipse cx="848" cy="565" rx="62" ry="52"/><ellipse cx="409" cy="750" rx="58" ry="84" transform="rotate(25 409 750)"/><ellipse cx="650" cy="750" rx="60" ry="75" transform="rotate(-20 650 750)"/></g>`;

function draw(c) {
  const B = 280.2 - 6.94 * c.rows, max = c.max * 1.1, py = v => B - v / max * (B - T);
  let o = `<svg class="plot" width="${W}" height="${H}" viewBox="0 0 ${W} ${H}"><rect x="3" y="9" width="436" height="315" fill="#fafafa"/>${mark}`;
  c.s.forEach((segs, k) => {
    let from = 0;
    const x0 = L + STEP * (k + 4), x1 = Math.min(R, x0 + STEP);
    segs.forEach(([to, col]) => {
      if (to > from) { o += `<rect x="${f(x0)}" y="${f(py(to))}" width="${f(x1 - x0)}" height="${f(py(from) - py(to))}" fill="${col}" shape-rendering="crispEdges"/>`; from = to; }
    });
  });
  for (let h = 11; h < 34; h += 2) {
    const x = f(L + (h - 9.25) * (R - L) / 24);
    o += `<path d="M${x} ${T}V${f(B)}" stroke="#000" stroke-opacity=".07"/><path d="M${x} ${f(B)}v3" stroke="#333" stroke-width=".7"/><text class="t-tick" x="${x}" y="${f(B + 9.8)}" text-anchor="middle">${String(h % 24).padStart(2, '0')}:00</text>`;
  }
  for (let v = 0; v <= max; v += c.st) {
    const y = f(py(v));
    o += `<path d="M${L} ${y}H${R}" stroke="#000" stroke-opacity=".07"/><path d="M${L - 3} ${y}h3" stroke="#333" stroke-width=".7"/><text class="t-tick" x="46.6" y="${f(y + 2.3)}" text-anchor="end">${v.toLocaleString('en-US')}</text>`;
  }
  o += `<rect x="${L}" y="${T}" width="${R - L}" height="${f(B - T)}" fill="none" stroke="#333" stroke-width=".9"/>`;
  const mid = (T + B) / 2, yx = c.max > 1000 ? 22.7 : 28.5;
  o += `<text class="t-title" x="221.2" y="15.6" text-anchor="middle">${c.t}</text><text class="t-sub" x="243.3" y="33.4" text-anchor="middle">24 Hours from 2024-10-21 09:15 to 2024-10-22 09:15 UTC</text><text class="t-max" x="242" y="${f(B + 27.7)}" text-anchor="middle">${c.m}</text><text class="t-y" transform="translate(${yx} ${f(mid)}) rotate(-90)" text-anchor="middle">${c.y}</text>`;
  c.l.forEach(([col, name, pct], i) => {
    if (!name) return;
    const [x, r] = c.cols[Math.floor(i / c.rows)], y = 318.2 - 7 * (c.rows - 1 - i % c.rows);
    if (col) o += `<rect x="${x + .3}" y="${y - 4.5}" width="4" height="4" fill="${col}" stroke="#333" stroke-width=".5"/>`;
    o += `<text class="t-leg" x="${col ? x + 8.7 : x}" y="${y}">${esc(name)}</text><text class="t-leg" x="${r}" y="${y}" text-anchor="end">${pct}</text>`;
  });
  if (c.g) o += `<text class="t-gen" x="437.5" y="327.5" text-anchor="end">Generated on 2024-10-22 07:29:${c.g} UTC</text>`;
  return o + '</svg>';
}
document.getElementById('plots').innerHTML = charts.map(draw).join('');
```
